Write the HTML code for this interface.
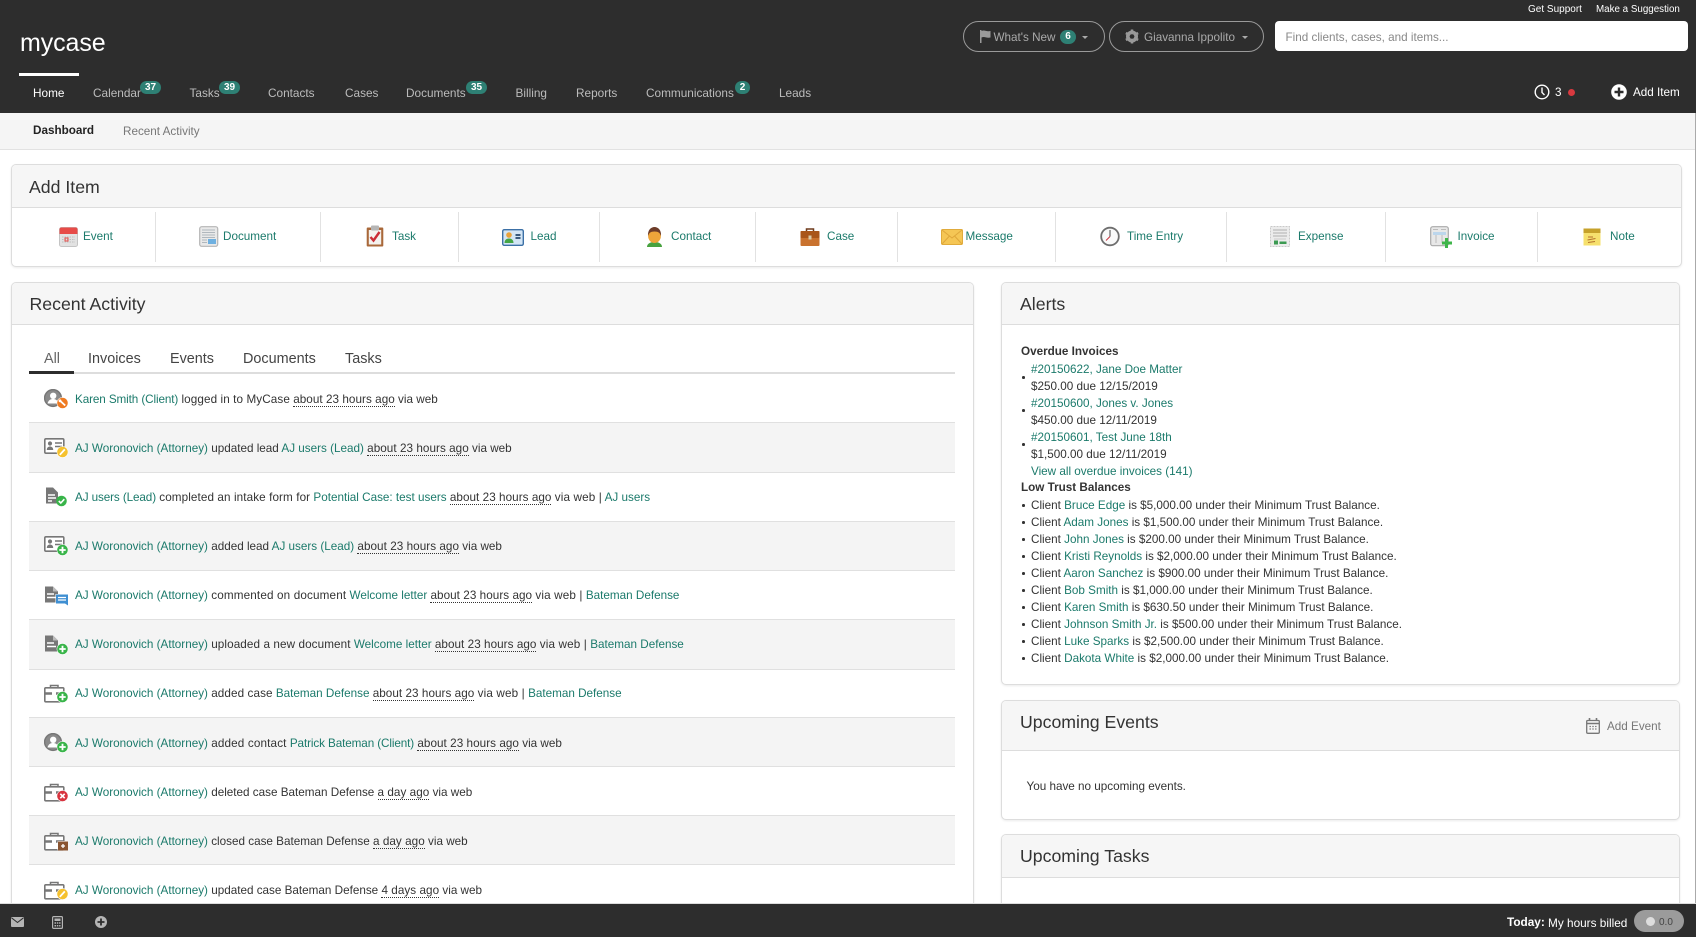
<!DOCTYPE html>
<html lang="en"><head><meta charset="utf-8"><title>MyCase Dashboard</title>
<style>
html,body{margin:0;padding:0;width:1696px;height:937px;overflow:hidden;background:#fff}
body{font-family:"Liberation Sans",Arial,sans-serif;font-size:11.7px;color:#333;position:relative}
a{color:#1b7a6b;text-decoration:none}
.t{position:absolute;white-space:nowrap;line-height:16px;margin-top:1px}
.b{position:absolute}
svg{position:absolute;overflow:visible}
#hd{position:absolute;left:0;top:0;width:1696px;height:113px;background:#2d2d2d}
#sub{position:absolute;left:0;top:113px;width:1696px;height:36px;background:#f5f5f5;border-bottom:1px solid #e2e2e2}
.n{color:#bcbcbc;font-size:11.8px}
.bd{position:absolute;height:13px;line-height:13px;border-radius:6.5px;background:#2e8074;color:#fff;font-size:10px;font-weight:bold;text-align:center}
.pill{position:absolute;top:21px;height:29px;border:1px solid #9a9a9a;border-radius:16px}
.caret{position:absolute;top:36px;width:0;height:0;border-left:3.5px solid transparent;border-right:3.5px solid transparent;border-top:3.5px solid #aaa}
.pn{position:absolute;background:#fff;border:1px solid #ddd;border-radius:5px;box-shadow:0 1px 2px rgba(0,0,0,.08);box-sizing:border-box;overflow:hidden}
.ph{position:absolute;left:0;right:0;top:0;background:#f6f6f6;border-bottom:1px solid #ddd;box-sizing:border-box}
.h{font-size:17.7px;color:#333;line-height:22px;margin-top:0}
.div{position:absolute;top:212px;height:50px;width:1px;background:#e2e2e2}
.tab{font-size:14.4px;color:#444}
.r{position:absolute;left:29px;width:926px;border-bottom:1px solid #e0e0e0;box-sizing:border-box}
.g{background:#f4f4f4}
abbr{text-decoration:none;border-bottom:1px dotted #333;letter-spacing:.05px}
.p1{letter-spacing:.1px}
.p2{letter-spacing:.15px}
.m1{letter-spacing:-.1px}
.d{position:absolute;left:1022px;width:2.5px;height:2.5px;border-radius:50%;background:#333}
#ft{position:absolute;left:0;top:903px;width:1696px;height:34px;background:#2d2d2d;border-top:1px solid #ddd;box-sizing:border-box}
</style></head>
<body>
<svg width="0" height="0" style="position:absolute">
<defs>
<symbol id="person" viewBox="0 0 24 22"><circle cx="9" cy="9" r="8.2" fill="#fff" stroke="#777" stroke-width="1.8"/><circle cx="9" cy="9" r="7.5" fill="#8a8a8a"/><circle cx="9.2" cy="6.8" r="3.2" fill="#fff"/><path d="M3.5 14.5c1-3.5 3-4.5 5.5-4.5s4.500 1 5.500 4.500z" fill="#fff"/></symbol>
<symbol id="card" viewBox="0 0 24 22"><rect x=".8" y=".8" width="19" height="14.400" rx="1.200" fill="#fff" stroke="#777" stroke-width="1.600"/><circle cx="6" cy="5.500" r="2.100" fill="#777"/><path d="M2.800 12c0-2.500 1.500-3.500 3.200-3.500s3.200 1 3.200 3.500z" fill="#777"/><path d="M11 5h7M11 8.500h7" stroke="#777" stroke-width="1.500"/></symbol>
<symbol id="doc" viewBox="0 0 24 22"><path d="M1 .5h8l5 5v11H1z" fill="#777"/><path d="M9 .5v5h5" fill="#bbb"/><path d="M3 8h7M3 11.500h9" stroke="#fff" stroke-width="1.500"/></symbol>
<symbol id="form" viewBox="0 0 24 22"><path d="M2 .5h7l5 5v11H2z" fill="#777"/><path d="M4 8h7M4 11h8M4 14h4" stroke="#fff" stroke-width="1.500"/></symbol>
<symbol id="case" viewBox="0 0 24 22"><path d="M6.500 4.500V2.500h7.500v2" fill="none" stroke="#777" stroke-width="1.500"/><rect x=".8" y="4.800" width="19" height="14" rx="1" fill="#fff" stroke="#777" stroke-width="1.600"/><path d="M1 10.500h18" stroke="#777" stroke-width="2.500"/><rect x="8" y="9" width="4" height="3.500" fill="#fff"/></symbol>
<symbol id="plus" viewBox="0 0 24 22"><circle cx="18.500" cy="14" r="5.800" fill="#fff"/><circle cx="18.500" cy="14" r="5.300" fill="#38b449"/><path d="M18.500 10.800v6.400M15.300 14h6.400" stroke="#fff" stroke-width="1.800"/></symbol>
<symbol id="check" viewBox="0 0 24 22"><circle cx="17.500" cy="14" r="5.300" fill="#38b449"/><path d="M14.800 14l2 2 3.500-3.800" stroke="#fff" stroke-width="1.600" fill="none"/></symbol>
<symbol id="pen" viewBox="0 0 24 22"><circle cx="18.500" cy="14" r="5.800" fill="#fff"/><circle cx="18.500" cy="14" r="5.300" fill="#f5c12e"/><path d="M15.800 16.800l5-5.400" stroke="#fff" stroke-width="1.800"/></symbol>
<symbol id="x" viewBox="0 0 24 22"><circle cx="18.500" cy="14" r="5.800" fill="#fff"/><circle cx="18.500" cy="14" r="5.300" fill="#d8343f"/><path d="M16.300 11.800l4.400 4.400M20.700 11.800l-4.400 4.400" stroke="#fff" stroke-width="1.700"/></symbol>
<symbol id="key" viewBox="0 0 24 22"><circle cx="18.500" cy="14" r="5.800" fill="#fff"/><circle cx="18.500" cy="14" r="5.300" fill="#ef7b22"/><path d="M15.800 11.500l5.400 5" stroke="#fff" stroke-width="1.800"/><circle cx="16" cy="11.800" r="1.400" fill="#fff"/></symbol>
<symbol id="bc" viewBox="0 0 24 22"><rect x="13.500" y="10" width="10.500" height="9.500" rx="1" fill="#fff"/><rect x="14" y="10.500" width="10" height="9" fill="#8a5430"/><path d="M19 13v4M17 15h4" stroke="#fff" stroke-width="1.300"/></symbol>
<symbol id="cm" viewBox="0 0 24 22"><rect x="11.500" y="8" width="13" height="9.500" fill="#fff"/><path d="M12 8.500h12v11l-3-2h-9z" fill="#3f8fd2"/><path d="M14 11.500h8M14 14h8" stroke="#fff" stroke-width="1.200"/></symbol>
</defs>
</svg>

<div id="hd"></div>
<div class="t" style="left:1528px;top:1px;font-size:10px;color:#fff">Get Support</div>
<div class="t" style="left:1596px;top:1px;font-size:9.8px;color:#fff">Make a Suggestion</div>
<div class="t" style="left:20px;top:28px;font-size:25px;line-height:30px;margin-top:0;color:#fff;letter-spacing:-.1px">mycase</div>
<div class="b" style="left:19px;top:73px;width:60px;height:3px;background:#fff"></div>

<div class="t n" style="left:33px;top:84px;color:#fff">Home</div>
<div class="t n" style="left:93px;top:84px">Calendar</div><div class="bd" style="left:140px;top:81px;width:21px">37</div>
<div class="t n" style="left:189.500px;top:84px">Tasks</div><div class="bd" style="left:219px;top:81px;width:21px">39</div>
<div class="t n" style="left:268px;top:84px">Contacts</div>
<div class="t n" style="left:345px;top:84px">Cases</div>
<div class="t n" style="left:406px;top:84px">Documents</div><div class="bd" style="left:466px;top:81px;width:21px">35</div>
<div class="t n" style="left:515.500px;top:84px">Billing</div>
<div class="t n" style="left:576px;top:84px">Reports</div>
<div class="t n" style="left:646px;top:84px">Communications</div><div class="bd" style="left:735px;top:81px;width:15px">2</div>
<div class="t n" style="left:779px;top:84px">Leads</div>

<div class="pill" style="left:963px;width:140px"></div>
<svg style="left:979px;top:30px" width="12" height="13" viewBox="0 0 12 13"><path d="M1 0v13h1.500V7.500c3-1.500 5 1 9 0V1c-4 1-6-1.500-9 0V0z" fill="#9a9a9a"/></svg>
<div class="t" style="left:993.500px;top:29px;color:#aaa">What's New</div>
<div class="bd" style="left:1060px;top:30px;width:16px;height:14px;line-height:14px;border-radius:7px">6</div>
<div class="caret" style="left:1082px"></div>
<div class="pill" style="left:1109px;width:153px"></div>
<svg style="left:1125px;top:29px" width="14" height="15" viewBox="0 0 14 15"><circle cx="7" cy="7.500" r="4.500" fill="none" stroke="#999" stroke-width="3"/><path d="M7 .5v14M.9 4l12.200 7M.9 11l12.200-7" stroke="#999" stroke-width="2.500"/><circle cx="7" cy="7.500" r="2.300" fill="#2d2d2d"/></svg>
<div class="t" style="left:1144px;top:29px;color:#aaa">Giavanna Ippolito</div>
<div class="caret" style="left:1242px"></div>
<div class="b" style="left:1275px;top:21px;width:413px;height:30px;background:#fff;border-radius:4px"></div>
<div class="t" style="left:1285.500px;top:29px;color:#888">Find clients, cases, and items...</div>

<svg style="left:1534px;top:84px" width="16" height="16" viewBox="0 0 16 16"><circle cx="8" cy="8" r="6.800" fill="none" stroke="#fff" stroke-width="1.400"/><path d="M8 3.500V8.500l2.500 2.500" fill="none" stroke="#fff" stroke-width="1.400"/></svg>
<div class="t" style="left:1555px;top:84px;color:#fff">3</div>
<div class="b" style="left:1568px;top:89px;width:7px;height:7px;border-radius:50%;background:#d8393f"></div>
<svg style="left:1611px;top:84px" width="16" height="16" viewBox="0 0 16 16"><circle cx="8" cy="8" r="7.800" fill="#fff"/><path d="M8 3.500v9M3.500 8h9" stroke="#2d2d2d" stroke-width="2.400"/></svg>
<div class="t" style="left:1633px;top:84px;color:#fff">Add Item</div>

<div id="sub"></div>
<div class="t" style="left:33px;top:122px;font-weight:bold;color:#222">Dashboard</div>
<div class="t" style="left:123px;top:123px;color:#777">Recent Activity</div>

<!-- Add Item panel -->
<div class="pn" style="left:11px;top:164px;width:1671px;height:103px"><div class="ph" style="height:43px"></div></div>
<div class="t h" style="left:29px;top:176px">Add Item</div>
<div class="div" style="left:155px"></div><div class="div" style="left:320px"></div><div class="div" style="left:458px"></div><div class="div" style="left:599px"></div><div class="div" style="left:755px"></div><div class="div" style="left:897px"></div><div class="div" style="left:1055px"></div><div class="div" style="left:1226px"></div><div class="div" style="left:1385px"></div><div class="div" style="left:1537px"></div>

<svg style="left:59px;top:227px" width="19" height="20" viewBox="0 0 19 20"><rect x=".5" y=".5" width="18" height="19" rx="2" fill="#e2e2e2" stroke="#c4c4c4"/><path d="M.5 7V2.500a2 2 0 012-2h14a2 2 0 012 2V7z" fill="#e74b48"/><path d="M3 10h13M3 12.500h13M3 15h13" stroke="#bdbdbd" stroke-dasharray="1.500 1"/><rect x="6" y="11" width="3" height="3" fill="none" stroke="#e74b48"/></svg>
<a class="t" style="left:83px;top:228px">Event</a>
<svg style="left:199px;top:226px" width="20" height="21" viewBox="0 0 20 21"><rect x=".7" y=".7" width="18" height="19.600" rx="2" fill="#e9e9e9" stroke="#b5b5b5" stroke-width="1.200"/><path d="M3 4h13M3 6.500h13M3 9h13M3 11.500h13M3 14h5M3 16.500h5" stroke="#b0b7bd"/><rect x="9" y="13" width="8" height="5" fill="#6fb0e0"/></svg>
<a class="t" style="left:223px;top:228px">Document</a>
<svg style="left:366px;top:225px" width="18" height="22" viewBox="0 0 18 22"><rect x=".7" y="2.500" width="16.600" height="19" rx="1" fill="#a9683a"/><rect x="2.800" y="5" width="12.400" height="14.500" fill="#f4f2ee"/><rect x="5" y=".5" width="8" height="5" rx="1" fill="#b5b5b5"/><path d="M4.500 12l3 3.500 6-8.500" stroke="#cb2d36" stroke-width="2.400" fill="none"/></svg>
<a class="t" style="left:392px;top:228px">Task</a>
<svg style="left:502px;top:229px" width="22" height="17" viewBox="0 0 22 17"><rect x=".7" y=".7" width="20.600" height="15.600" rx="1.500" fill="#d3e5f5" stroke="#3c70a6" stroke-width="1.400"/><circle cx="7" cy="6" r="2.800" fill="#e9a23c"/><path d="M2.500 14c0-3 2-4.500 4.500-4.500s4.500 1.500 4.500 4.500z" fill="#44a546"/><path d="M13.500 6h5M13.500 9h5" stroke="#24456b" stroke-width="1.700"/></svg>
<a class="t" style="left:530.500px;top:228px">Lead</a>
<svg style="left:645px;top:227px" width="19" height="20" viewBox="0 0 19 20"><path d="M2 20c0-3.500 3.500-5 7.500-5s7.500 1.500 7.500 5z" fill="#48a23f"/><ellipse cx="9.500" cy="9" rx="6.400" ry="7" fill="#eea53a"/><path d="M3 9C2.500 3 6 0 9.500 0S16.500 3 16 9c-1-3-2.500-4.500-6.500-4.500S4 6 3 9z" fill="#6d3c29"/></svg>
<a class="t" style="left:671px;top:228px">Contact</a>
<svg style="left:800px;top:228px" width="20" height="18" viewBox="0 0 20 18"><path d="M6.500 3V1h7v2" fill="none" stroke="#6e3a1c" stroke-width="1.500"/><rect x=".5" y="3" width="19" height="15" rx="1" fill="#c9722e"/><rect x=".5" y="3" width="19" height="7" rx="1" fill="#a95519"/><rect x="8.500" y="7.500" width="3" height="4" fill="#d8c9a8"/></svg>
<a class="t" style="left:827px;top:228px">Case</a>
<svg style="left:941px;top:229px" width="22" height="16" viewBox="0 0 22 16"><rect x=".5" y=".5" width="21" height="15" rx="1.200" fill="#f5c655" stroke="#e0ab3c"/><path d="M1 1l10 8 10-8M1 15l7.500-8M21 15l-7.500-8" fill="none" stroke="#dfa73a"/></svg>
<a class="t" style="left:965.500px;top:228px">Message</a>
<svg style="left:1100px;top:226px" width="20" height="21" viewBox="0 0 20 21"><circle cx="10" cy="10.500" r="8.800" fill="#fafafa" stroke="#6e6e6e" stroke-width="1.800"/><path d="M10 4v6.500" stroke="#444"/><path d="M10 10.500l-4 4" stroke="#c8303c"/></svg>
<a class="t" style="left:1127px;top:228px">Time Entry</a>
<svg style="left:1270px;top:226px" width="20" height="21" viewBox="0 0 20 21"><rect x=".5" y=".5" width="19" height="20" fill="#ececec" stroke="#c9c9c9" stroke-dasharray="2 1"/><path d="M3 4h14M3 7h14M3 10h14" stroke="#bcbcbc" stroke-width="1.200"/><path d="M4 13h12" stroke="#ccc"/><rect x="4" y="14.500" width="4" height="4" fill="#3c9a52"/><rect x="9.500" y="15.500" width="7" height="2.500" fill="#3c9a52"/></svg>
<a class="t" style="left:1298px;top:228px">Expense</a>
<svg style="left:1430px;top:226px" width="22" height="23" viewBox="0 0 22 23"><rect x=".7" y=".7" width="17.600" height="19" rx="2" fill="#e8e8e8" stroke="#a9a9a9" stroke-width="1.200"/><rect x="3" y="6" width="13" height="3" fill="#bcd6ec"/><path d="M6 9v8M12 9v8M3 3.500h5M11 3.500h5" stroke="#bbb"/><path d="M16.500 12v10M12 17h10" stroke="#3fb54a" stroke-width="3"/></svg>
<a class="t" style="left:1457.500px;top:228px">Invoice</a>
<svg style="left:1583px;top:228px" width="18" height="18" viewBox="0 0 18 18"><rect x=".5" y=".5" width="17" height="17" fill="#f6e06d"/><rect x=".5" y=".5" width="17" height="4.500" fill="#c6a12a"/><path d="M5 9h5M4.500 12l8-1.500M5 14.500l7-1" stroke="#b4712c"/></svg>
<a class="t" style="left:1610px;top:228px">Note</a>

<!-- Recent Activity -->
<div class="pn" style="left:11px;top:282px;width:963px;height:660px"><div class="ph" style="height:42px"></div></div>
<div class="t h" style="left:29.500px;top:293px">Recent Activity</div>
<div class="t tab" style="left:44px;top:350px;color:#666">All</div>
<div class="t tab" style="left:88px;top:350px">Invoices</div>
<div class="t tab" style="left:170px;top:350px">Events</div>
<div class="t tab" style="left:243px;top:350px">Documents</div>
<div class="t tab" style="left:345px;top:350px">Tasks</div>
<div class="b" style="left:29px;top:372px;width:926px;height:2px;background:#ddd"></div>
<div class="b" style="left:29px;top:371px;width:45px;height:3px;background:#2d2d2d"></div>

<div class="r" style="top:374px;height:49px"></div>
<div class="r g" style="top:423px;height:50px"></div>
<div class="r" style="top:473px;height:49px"></div>
<div class="r g" style="top:522px;height:49px"></div>
<div class="r" style="top:571px;height:49px"></div>
<div class="r g" style="top:620px;height:50px"></div>
<div class="r" style="top:670px;height:48px"></div>
<div class="r g" style="top:718px;height:49px"></div>
<div class="r" style="top:767px;height:49px"></div>
<div class="r g" style="top:816px;height:49px"></div>

<svg style="left:44px;top:389px" width="24" height="22"><use href="#person"/><use href="#key"/></svg>
<div class="t" style="left:75px;top:391px"><a class="m1">Karen Smith (Client)</a> <span class="p1">logged in to MyCase</span> <abbr>about 23 hours ago</abbr> via web</div>
<svg style="left:44px;top:438px" width="24" height="22"><use href="#card"/><use href="#pen"/></svg>
<div class="t" style="left:75px;top:440px"><a>AJ Woronovich (Attorney)</a> updated lead <a>AJ users (Lead)</a> <abbr>about 23 hours ago</abbr> via web</div>
<svg style="left:44px;top:487px" width="24" height="22"><use href="#form"/><use href="#check"/></svg>
<div class="t" style="left:75px;top:489px"><a class="m1">AJ users (Lead)</a> <span class="p1">completed an intake form for</span> <a>Potential Case: test users</a> <abbr>about 23 hours ago</abbr> <span class="p2">via web |</span> <a>AJ users</a></div>
<svg style="left:44px;top:536px" width="24" height="22"><use href="#card"/><use href="#plus"/></svg>
<div class="t" style="left:75px;top:538px"><a>AJ Woronovich (Attorney)</a> added lead <a>AJ users (Lead)</a> <abbr>about 23 hours ago</abbr> via web</div>
<svg style="left:44px;top:586px" width="24" height="22"><use href="#doc"/><use href="#cm"/></svg>
<div class="t" style="left:75px;top:587px"><a>AJ Woronovich (Attorney)</a> <span class="p2">commented on document</span> <a>Welcome letter</a> <abbr>about 23 hours ago</abbr> <span class="p2">via web |</span> <a>Bateman Defense</a></div>
<svg style="left:44px;top:635px" width="24" height="22"><use href="#doc"/><use href="#plus"/></svg>
<div class="t" style="left:75px;top:636px"><a>AJ Woronovich (Attorney)</a> <span class="p1">uploaded a new document</span> <a>Welcome letter</a> <abbr>about 23 hours ago</abbr> <span class="p2">via web |</span> <a>Bateman Defense</a></div>
<svg style="left:44px;top:683px" width="24" height="22"><use href="#case"/><use href="#plus"/></svg>
<div class="t" style="left:75px;top:685px"><a>AJ Woronovich (Attorney)</a> <span class="p1">added case</span> <a>Bateman Defense</a> <abbr>about 23 hours ago</abbr> <span class="p2">via web |</span> <a>Bateman Defense</a></div>
<svg style="left:44px;top:733px" width="24" height="22"><use href="#person"/><use href="#plus"/></svg>
<div class="t" style="left:75px;top:735px"><a>AJ Woronovich (Attorney)</a> <span class="p2">added contact</span> <a class="m1">Patrick Bateman (Client)</a> <abbr>about 23 hours ago</abbr> via web</div>
<svg style="left:44px;top:782px" width="24" height="22"><use href="#case"/><use href="#x"/></svg>
<div class="t" style="left:75px;top:784px"><a>AJ Woronovich (Attorney)</a> deleted case Bateman Defense <abbr>a day ago</abbr> via web</div>
<svg style="left:44px;top:831px" width="24" height="22"><use href="#case"/><use href="#bc"/></svg>
<div class="t" style="left:75px;top:833px"><a>AJ Woronovich (Attorney)</a> closed case Bateman Defense <abbr>a day ago</abbr> via web</div>
<svg style="left:44px;top:880px" width="24" height="22"><use href="#case"/><use href="#pen"/></svg>
<div class="t" style="left:75px;top:882px"><a>AJ Woronovich (Attorney)</a> updated case Bateman Defense <abbr>4 days ago</abbr> via web</div>

<!-- Alerts -->
<div class="pn" style="left:1001px;top:282px;width:679px;height:403px"><div class="ph" style="height:42px"></div></div>
<div class="t h" style="left:1020px;top:293px">Alerts</div>
<div class="t" style="left:1021px;top:343px;font-weight:bold">Overdue Invoices</div>
<div class="d" style="top:376px"></div><div class="d" style="top:409px"></div><div class="d" style="top:443px"></div>
<a class="t" style="left:1031px;top:361px">#20150622, Jane Doe Matter</a>
<div class="t" style="left:1031px;top:378px">$250.00 due 12/15/2019</div>
<a class="t" style="left:1031px;top:395px">#20150600, Jones v. Jones</a>
<div class="t" style="left:1031px;top:412px">$450.00 due 12/11/2019</div>
<a class="t" style="left:1031px;top:429px">#20150601, Test June 18th</a>
<div class="t" style="left:1031px;top:446px">$1,500.00 due 12/11/2019</div>
<a class="t" style="left:1031px;top:463px">View all overdue invoices (141)</a>
<div class="t" style="left:1021px;top:479px;font-weight:bold">Low Trust Balances</div>
<div class="d" style="top:504px"></div><div class="t" style="left:1031px;top:497px">Client <a>Bruce Edge</a> is $5,000.00 under their Minimum Trust Balance.</div>
<div class="d" style="top:521px"></div><div class="t" style="left:1031px;top:514px">Client <a>Adam Jones</a> is $1,500.00 under their Minimum Trust Balance.</div>
<div class="d" style="top:538px"></div><div class="t" style="left:1031px;top:531px">Client <a>John Jones</a> is $200.00 under their Minimum Trust Balance.</div>
<div class="d" style="top:555px"></div><div class="t" style="left:1031px;top:548px">Client <a>Kristi Reynolds</a> is $2,000.00 under their Minimum Trust Balance.</div>
<div class="d" style="top:572px"></div><div class="t" style="left:1031px;top:565px">Client <a>Aaron Sanchez</a> is $900.00 under their Minimum Trust Balance.</div>
<div class="d" style="top:589px"></div><div class="t" style="left:1031px;top:582px">Client <a>Bob Smith</a> is $1,000.00 under their Minimum Trust Balance.</div>
<div class="d" style="top:606px"></div><div class="t" style="left:1031px;top:599px">Client <a>Karen Smith</a> is $630.50 under their Minimum Trust Balance.</div>
<div class="d" style="top:623px"></div><div class="t" style="left:1031px;top:616px">Client <a>Johnson Smith Jr.</a> is $500.00 under their Minimum Trust Balance.</div>
<div class="d" style="top:640px"></div><div class="t" style="left:1031px;top:633px">Client <a>Luke Sparks</a> is $2,500.00 under their Minimum Trust Balance.</div>
<div class="d" style="top:657px"></div><div class="t" style="left:1031px;top:650px">Client <a>Dakota White</a> is $2,000.00 under their Minimum Trust Balance.</div>

<!-- Upcoming Events -->
<div class="pn" style="left:1001px;top:700px;width:679px;height:120px"><div class="ph" style="height:50px"></div></div>
<div class="t h" style="left:1020px;top:711px">Upcoming Events</div>
<svg style="left:1586px;top:718px" width="14" height="16" viewBox="0 0 14 16"><rect x=".7" y="2.500" width="12.600" height="12.800" rx="1" fill="none" stroke="#777" stroke-width="1.300"/><path d="M1 5.500h12" stroke="#777" stroke-width="1.500"/><path d="M3.500 0v3M10.500 0v3" stroke="#777" stroke-width="1.600"/><path d="M3.500 8.500h7M3.500 11h7" stroke="#777" stroke-width="1.300" stroke-dasharray="1.400 1.400"/></svg>
<div class="t" style="left:1607px;top:718px;color:#777">Add Event</div>
<div class="t" style="left:1026.500px;top:778px">You have no upcoming events.</div>

<!-- Upcoming Tasks -->
<div class="pn" style="left:1001px;top:834px;width:679px;height:110px"><div class="ph" style="height:43px"></div></div>
<div class="t h" style="left:1020px;top:845px">Upcoming Tasks</div>

<div class="b" style="left:1695px;top:113px;width:1px;height:790px;background:#aaa"></div>

<!-- Footer -->
<div id="ft"></div>
<svg style="left:11px;top:917px" width="13" height="10" viewBox="0 0 13 10"><rect width="13" height="10" rx="1" fill="#b5b5b5"/><path d="M.5.8l6 4.700 6-4.700" fill="none" stroke="#2d2d2d" stroke-width="1"/></svg>
<svg style="left:52px;top:916px" width="11" height="13" viewBox="0 0 11 13"><rect x=".6" y=".6" width="9.800" height="11.800" rx="1" fill="none" stroke="#b5b5b5" stroke-width="1.200"/><rect x="2.500" y="2.500" width="6" height="2.500" fill="#b5b5b5"/><path d="M2.500 7h6M2.500 9.800h6" stroke="#b5b5b5" stroke-width="1.500" stroke-dasharray="1.500 .8"/></svg>
<svg style="left:95px;top:916px" width="12" height="12" viewBox="0 0 12 12"><circle cx="6" cy="6" r="6" fill="#b5b5b5"/><path d="M6 2.500v7M2.500 6h7" stroke="#2d2d2d" stroke-width="1.800"/></svg>
<div class="t" style="left:1507px;top:912.500px;font-weight:bold;color:#fff;font-size:11.800px">Today:</div>
<div class="t" style="left:1548px;top:913.500px;color:#fff;font-size:11.800px">My hours billed</div>
<div class="b" style="left:1634px;top:910px;width:50px;height:22px;border-radius:11px;background:#9b9b9b"></div>
<div class="b" style="left:1646px;top:917px;width:9px;height:9px;border-radius:50%;background:#ddd"></div>
<div class="t" style="left:1659px;top:913.500px;font-size:10px;color:#444">0.0</div>
</body></html>
